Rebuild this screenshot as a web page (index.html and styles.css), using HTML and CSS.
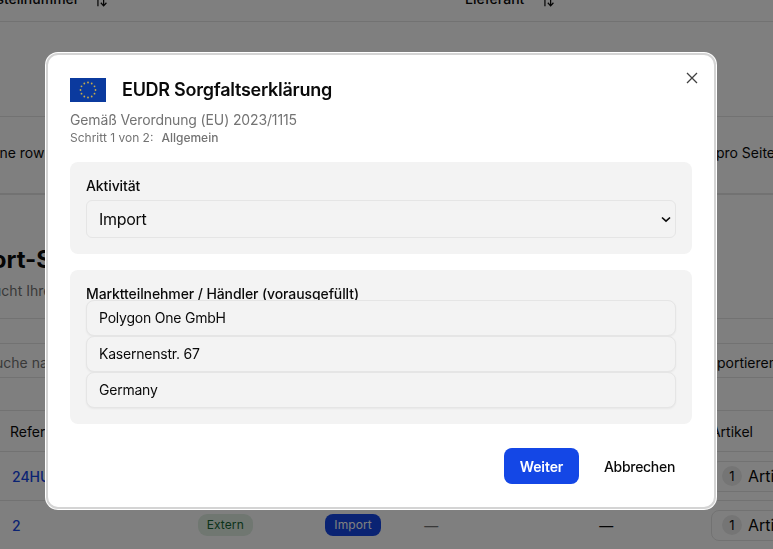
FILE: index.html
```html
<!DOCTYPE html>
<html lang="de">
<head>
<meta charset="utf-8">
<title>EUDR Sorgfaltserklärung</title>
<link rel="stylesheet" href="styles.css">
</head>
<body>
<main class="page">
  <div class="top-head">
    <span class="th-a">Bestellnummer</span><svg class="sort" viewBox="0 0 16 16"><path d="M4.5 2v12M11 2v11M7.8 10 11 13.5 14.2 10"/></svg>
    <span class="th-b">Lieferant</span><svg class="sort" viewBox="0 0 16 16"><path d="M4.5 2v12M11 2v11M7.8 10 11 13.5 14.2 10"/></svg>
  </div>
  <div class="empty-row"></div>
  <div class="pager"><span class="pager-a">Keine rows</span><span>Zeilen pro Seite</span></div>
  <h1 class="bg-title">Import-Sorgfalt</h1>
  <p class="bg-sub">Durchsucht Ihre</p>
  <div class="gap-row"></div>
  <div class="search-row"><span class="search-a">Suche nach</span><span class="export">Exportieren</span></div>
  <div class="gap-row2"></div>
  <div class="t-row t-head"><span>Referenz</span><span class="art-head">Artikel</span></div>
  <div class="t-row t-one"><a class="ref">24HUB</a><span class="chip"><i>1</i>Artikel</span></div>
  <div class="t-row t-two">
    <a class="ref">2</a>
    <span class="badge extern">Extern</span>
    <span class="badge import">Import</span>
    <span class="dash light">—</span>
    <span class="dash">—</span>
    <span class="chip"><i>1</i>Artikel</span>
  </div>
</main>
<div class="overlay">
  <section class="dialog">
    <button class="close" aria-label="Schließen"><svg viewBox="0 0 16 16"><path d="M3 3l10 10M13 3 3 13"/></svg></button>
    <header class="title-row">
      <svg class="flag" viewBox="0 0 36 24">
        <rect width="36" height="24" fill="#0b3a9e"/>
        <g fill="#c9ad4a">
          <circle cx="18" cy="4.5" r=".9"/><circle cx="21.7" cy="5.5" r=".9"/><circle cx="24.5" cy="8.3" r=".9"/><circle cx="25.5" cy="12" r=".9"/><circle cx="24.5" cy="15.7" r=".9"/><circle cx="21.7" cy="18.5" r=".9"/><circle cx="18" cy="19.5" r=".9"/><circle cx="14.3" cy="18.5" r=".9"/><circle cx="11.5" cy="15.7" r=".9"/><circle cx="10.5" cy="12" r=".9"/><circle cx="11.5" cy="8.3" r=".9"/><circle cx="14.3" cy="5.5" r=".9"/>
        </g>
      </svg>
      <h2>EUDR Sorgfaltserklärung</h2>
    </header>
    <p class="sub">Gemäß Verordnung (EU) 2023/1115</p>
    <p class="step">Schritt 1 von 2:<b>Allgemein</b></p>
    <div class="card card-a">
      <label class="label">Aktivität</label>
      <div class="select-wrap">
        <select class="select"><option>Import</option></select>
        <svg class="chev" viewBox="0 0 10 7"><path d="M1 1.5 5 5.2 9 1.5"/></svg>
      </div>
    </div>
    <div class="card card-b">
      <label class="label">Marktteilnehmer / Händler (vorausgefüllt)</label>
      <div class="stack">
        <input class="field" value="Polygon One GmbH">
        <input class="field" value="Kasernenstr. 67">
        <input class="field" value="Germany">
      </div>
    </div>
    <footer class="actions">
      <button class="primary">Weiter</button>
      <button class="ghost">Abbrechen</button>
    </footer>
  </section>
</div>
</body>
</html>
```
FILE: styles.css
```css
* { box-sizing: border-box; }
html, body { margin: 0; height: 549px; overflow: hidden; }
body { font-family: Inter, "Liberation Sans", sans-serif; color: #0a0a0a; background: #fff; }

.page { height: 549px; overflow: hidden; font-size: 14px; }
.top-head { height: 22px; border-bottom: 1px solid #e5e5e5; display: flex; align-items: flex-end; padding-bottom: 14px; white-space: nowrap; line-height: 17px; }
.th-a { margin-left: -21px; width: 97px; font-weight: 500; }
.th-a + .sort { margin-left: 18px; }
.th-b { margin-left: 357px; width: 64px; font-weight: 500; }
.th-b + .sort { margin-left: 12px; }
.sort { width: 14px; height: 14px; flex: none; margin-bottom: -1px; fill: none; stroke: #0a0a0a; stroke-width: 1.4; }
.empty-row { height: 95px; border-bottom: 1px solid #e5e5e5; }
.pager { height: 78px; padding-bottom: 6px; border-bottom: 2px solid #e5e5e5; display: flex; justify-content: space-between; align-items: center; white-space: nowrap; margin-right: -2px; }
.pager-a { margin-left: -21px; }
.bg-title { margin: 49px 0 0 -52px; font-size: 24px; line-height: 32px; font-weight: 700; white-space: nowrap; }
.bg-sub { margin: 5px 0 0 -54px; font-size: 14px; line-height: 20px; color: #737373; white-space: nowrap; }
.gap-row { height: 25px; margin-top: 17px; border-top: 1px solid #e5e5e5; }
.search-row { height: 35px; padding-top: 3px; border-top: 1px solid #e5e5e5; border-bottom: 1px solid #e5e5e5; display: flex; justify-content: space-between; align-items: center; white-space: nowrap; }
.search-a { margin-left: -14px; color: #737373; }
.export { margin-right: -4px; }
.gap-row2 { height: 32px; }
.t-row { border-top: 1px solid #e5e5e5; display: flex; align-items: center; white-space: nowrap; padding-left: 10px; justify-content: space-between; }
.t-head { height: 41px; }
.t-one { height: 49px; }
.t-two { height: 49px; justify-content: flex-start; }
.art-head { margin-right: 20px; }
.ref { color: #1447e6; font-weight: 500; padding-left: 2px; }
.chip { display: inline-flex; align-items: center; gap: 6px; height: 31px; width: 110px; flex: none; margin-right: -48px; padding: 0 10px; font-size: 16px; border: 1px solid #e5e5e5; border-radius: 8px; }
.chip i { font-style: normal; width: 20px; height: 20px; border-radius: 50%; background: #ebebeb; font-size: 13px; font-weight: 400; display: flex; align-items: center; justify-content: center; }
.badge { font-size: 12px; line-height: 16px; height: 22px; padding: 3px 9px; border-radius: 8px; font-weight: 400; letter-spacing: .1px; }
.extern { background: #e0efe3; color: #166534; margin-left: 177px; border-radius: 9px; }
.import { background: #1447e6; color: #fff; margin-left: 72px; padding: 3px 9.5px; }
.dash { margin-left: 43px; }
.dash.light { color: #737373; }
.dash + .dash { margin-left: 161px; }
.t-two .chip { margin-left: auto; }

.overlay { position: fixed; inset: 0; background: rgba(0, 0, 0, .5); }
.dialog { position: absolute; left: 46px; top: 53px; width: 670px; height: 456px; padding: 23px 22px 0; background: #fff; border: 2px solid #d4d4d4; border-radius: 12px; box-shadow: 0 0 0 1px #fff; }
.close { position: absolute; top: 15px; right: 14px; width: 16px; height: 16px; padding: 0; border: 0; background: none; color: #404040; }
.close svg { display: block; width: 16px; height: 16px; fill: none; stroke: currentColor; stroke-width: 1.3; }
.title-row { display: flex; align-items: center; gap: 16px; height: 24px; }
.flag { width: 36px; height: 24px; flex: none; }
h2 { margin: 0; font-size: 18px; line-height: 24px; font-weight: 600; letter-spacing: -.26px; }
.sub { margin: 8px 0 0; font-size: 14px; line-height: 20px; color: #737373; letter-spacing: -.13px; }
.step { margin: 0; font-size: 12px; line-height: 16px; color: #737373; }
.step b { font-weight: 500; margin-left: 8px; }
.card { background: #f3f3f3; border-radius: 8px; padding: 17px 16px 16px; }
.card-a { margin-top: 16px; height: 92px; }
.card-b { margin-top: 16px; height: 154px; }
.label { display: block; font-size: 14px; line-height: 14px; font-weight: 500; letter-spacing: -.1px; }
.select-wrap { position: relative; margin-top: 7px; }
.select { display: block; width: 100%; height: 38px; padding: 0 12px; font: 16px Inter, "Liberation Sans", sans-serif; letter-spacing: -.3px; color: #0a0a0a; background: transparent; border: 1px solid #e5e5e5; border-radius: 6px; appearance: none; }
.chev { position: absolute; right: 5px; top: 16px; width: 10px; height: 7px; fill: none; stroke: #0a0a0a; stroke-width: 1.6; pointer-events: none; }
.stack { display: flex; flex-direction: column; margin-top: -1px; }
.field { display: block; width: 100%; height: 36px; padding: 0 12px 2px; font: 14px Inter, "Liberation Sans", sans-serif; letter-spacing: -.22px; color: #0a0a0a; background: #f3f3f3; border: 1px solid #e5e5e5; border-radius: 8px; box-shadow: 0 1px 2px rgba(0,0,0,.05); }
.actions { display: flex; justify-content: flex-end; gap: 8px; margin-top: 24px; }
.actions button { height: 36px; border: 0; border-radius: 8px; font: 500 14px Inter, "Liberation Sans", sans-serif; }
.actions .primary { width: 75px; background: #1447e6; color: #fff; font-weight: 600; letter-spacing: -.1px; }
.actions .ghost { width: 105px; padding: 0; background: none; color: #0a0a0a; letter-spacing: -.3px; }
```
